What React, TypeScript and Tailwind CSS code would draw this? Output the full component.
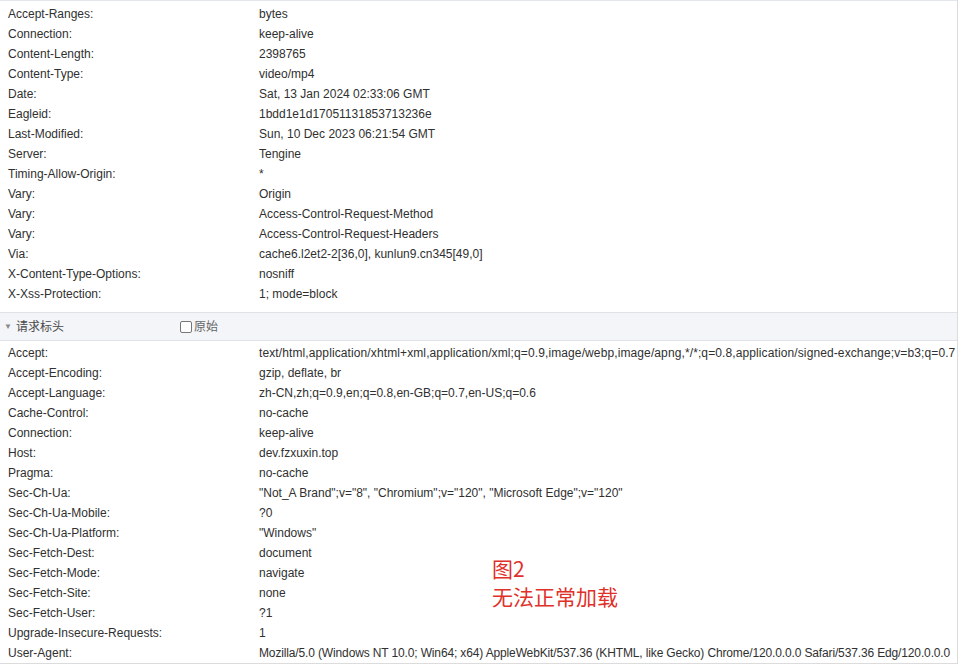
import React from "react";

const response: [string, string][] = [
  ["Accept-Ranges:", "bytes"],
  ["Connection:", "keep-alive"],
  ["Content-Length:", "2398765"],
  ["Content-Type:", "video/mp4"],
  ["Date:", "Sat, 13 Jan 2024 02:33:06 GMT"],
  ["Eagleid:", "1bdd1e1d17051131853713236e"],
  ["Last-Modified:", "Sun, 10 Dec 2023 06:21:54 GMT"],
  ["Server:", "Tengine"],
  ["Timing-Allow-Origin:", "*"],
  ["Vary:", "Origin"],
  ["Vary:", "Access-Control-Request-Method"],
  ["Vary:", "Access-Control-Request-Headers"],
  ["Via:", "cache6.l2et2-2[36,0], kunlun9.cn345[49,0]"],
  ["X-Content-Type-Options:", "nosniff"],
  ["X-Xss-Protection:", "1; mode=block"],
];

const request: [string, string, string?][] = [
  ["Accept:", "text/html,application/xhtml+xml,application/xml;q=0.9,image/webp,image/apng,*/*;q=0.8,application/signed-exchange;v=b3;q=0.7", "tracking-[0.11px]"],
  ["Accept-Encoding:", "gzip, deflate, br"],
  ["Accept-Language:", "zh-CN,zh;q=0.9,en;q=0.8,en-GB;q=0.7,en-US;q=0.6"],
  ["Cache-Control:", "no-cache"],
  ["Connection:", "keep-alive"],
  ["Host:", "dev.fzxuxin.top"],
  ["Pragma:", "no-cache"],
  ["Sec-Ch-Ua:", "\"Not_A Brand\";v=\"8\", \"Chromium\";v=\"120\", \"Microsoft Edge\";v=\"120\""],
  ["Sec-Ch-Ua-Mobile:", "?0"],
  ["Sec-Ch-Ua-Platform:", "\"Windows\""],
  ["Sec-Fetch-Dest:", "document"],
  ["Sec-Fetch-Mode:", "navigate"],
  ["Sec-Fetch-Site:", "none"],
  ["Sec-Fetch-User:", "?1"],
  ["Upgrade-Insecure-Requests:", "1"],
  ["User-Agent:", "Mozilla/5.0 (Windows NT 10.0; Win64; x64) AppleWebKit/537.36 (KHTML, like Gecko) Chrome/120.0.0.0 Safari/537.36 Edg/120.0.0.0", "tracking-[-0.14px]"],
];

function Row({ name, value, extra }: { name: string; value: string; extra?: string }) {
  return (
    <div className="flex h-[20px] items-center whitespace-nowrap">
      <div className="w-[259px] shrink-0 pl-[8px]">{name}</div>
      <div className={extra ?? ""}>{value}</div>
    </div>
  );
}

export default function App() {
  return (
    <div
      className="relative w-[958px] h-[664px] overflow-hidden bg-white text-[12px] text-[#303030] border-r border-[#dcdcdc]"
      style={{ fontFamily: '"Liberation Sans", "Noto Sans CJK SC", sans-serif' }}
    >
      <div className="border-t border-[#e3e6ea] pt-[3px] pb-[8px]">
        {response.map(([n, v], i) => (
          <Row key={i} name={n} value={v} />
        ))}
      </div>
      <div className="flex h-[29px] items-center border-y border-[#dfe3e8] bg-[#f3f5f8] text-[#4a4a4a]">
        <span className="ml-[4px] mr-[4px] text-[8px] text-[#8a8a8a]">▼</span>
        <span className="w-[164px]">请求标头</span>
        <span className="flex items-center gap-[2px] text-[#666]">
          <span className="inline-block h-[12px] w-[12px] rounded-[2px] border border-[#777] bg-white" />
          原始
        </span>
      </div>
      <div className="pt-[2px] border-b border-[#dcdcdc]">
        {request.map(([n, v, e], i) => (
          <Row key={i} name={n} value={v} extra={e} />
        ))}
      </div>
      <div
        className="absolute left-[492px] top-[554px] text-[21px] leading-[28px] text-[#e0302a]"
        style={{ fontFamily: '"Noto Sans CJK SC", sans-serif' }}
      >
        <div>图2</div>
        <div>无法正常加载</div>
      </div>
    </div>
  );
}
